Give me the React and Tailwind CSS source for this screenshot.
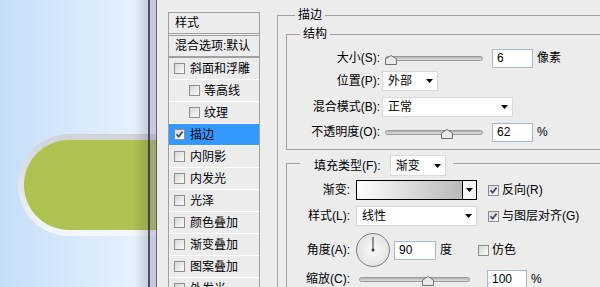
import React from "react";

const Check = ({ checked }) => (
  <span className="flex h-[11px] w-[11px] shrink-0 items-center justify-center border border-[#8e8f8f] bg-linear-to-br from-[#d6d6d6] to-[#fbfbfb]">
    {checked ? (
      <svg width="9" height="9" viewBox="0 0 9 9">
        <path d="M1.5 4.2 L3.6 6.6 L7.6 1.6" stroke="#3d4d78" strokeWidth="1.7" fill="none" />
      </svg>
    ) : null}
  </span>
);

const Arrow = () => (
  <svg width="7" height="4" viewBox="0 0 7 4" className="shrink-0">
    <path d="M0 0 H7 L3.5 4 Z" fill="#000" />
  </svg>
);

const Thumb = ({ className }) => (
  <svg width="12" height="10" viewBox="0 0 12 10" className={`absolute top-[-2px] ${className}`}>
    <path d="M6 0.5 L11.5 4 L11.5 9.5 L0.5 9.5 L0.5 4 Z" fill="#e9e9e9" stroke="#6f6f6f" />
  </svg>
);

const Input = ({ value, className }) => (
  <div className={`flex h-[19px] items-center border border-[#a7b9d1] bg-white pl-[4px] text-[12px] ${className}`}>
    {value}
  </div>
);

const Select = ({ text, className }) => (
  <div className={`flex h-[20px] items-center justify-between border border-[#d9d9d9] bg-white pl-[5px] pr-[4px] ${className}`}>
    <span>{text}</span>
    <Arrow />
  </div>
);

const items = [
  { name: "斜面和浮雕", indent: false },
  { name: "等高线", indent: true },
  { name: "纹理", indent: true },
  { name: "描边", indent: false, active: true },
  { name: "内阴影", indent: false },
  { name: "内发光", indent: false },
  { name: "光泽", indent: false },
  { name: "颜色叠加", indent: false },
  { name: "渐变叠加", indent: false },
  { name: "图案叠加", indent: false },
  { name: "外发光", indent: false },
];

export default function App() {
  return (
    <div className="flex h-[287px] w-[600px] overflow-hidden font-['Liberation_Sans','Noto_Sans_CJK_SC',sans-serif] text-[12px] text-black">
      {/* canvas behind the dialog */}
      <div className="relative h-full w-[157px] shrink-0 overflow-hidden bg-linear-to-r from-[#c6def9] to-[#eaf4fe] pl-[18px] pt-[134px]">
        <div className="h-[102px] w-[200px] rounded-l-[51px] bg-linear-to-b from-[#cfd3d8] to-[#f4f8fc] pl-[6px] pt-[6px]">
          <div className="h-[90px] w-full rounded-l-[45px] bg-[#adc251]"></div>
        </div>
        <div className="absolute right-[9px] top-0 h-full w-[14px] bg-linear-to-r from-transparent to-[rgba(40,40,60,0.18)]"></div>
        <div className="absolute right-0 top-0 flex h-full">
          <div className="w-[2px] bg-[rgba(40,40,48,0.8)]"></div>
          <div className="w-[6px] bg-[rgba(140,120,180,0.35)]"></div>
          <div className="w-[1px] bg-[rgba(50,50,50,0.7)]"></div>
        </div>
      </div>

      {/* dialog */}
      <div className="flex h-full min-w-0 flex-1 overflow-hidden bg-[#ececec] pl-[11px]">
        <div className="mt-[12px] flex w-[92px] shrink-0 flex-col self-start border border-[#a0a0a0]">
          <div className="flex h-[23px] items-center border-b-[3px] border-double border-[#a0a0a0] pl-[6px]">样式</div>
          <div className="flex h-[22px] items-center border-b-[2px] border-[#a0a0a0] pl-[6px]">混合选项:默认</div>
          {items.map((it, i) => (
            <div
              key={i}
              className={`flex h-[22px] items-center border-b border-white ${it.indent ? "pl-[20px]" : "pl-[5px]"} ${it.active ? "bg-[#3399ff]" : ""}`}
            >
              <Check checked={it.active} />
              <span className={it.indent ? "ml-[4px]" : "ml-[5px]"}>{it.name}</span>
            </div>
          ))}
        </div>

        <div className="ml-[17px] shrink-0 pt-[7px]">
          <fieldset className="w-[340px] border border-[#a0a0a0]">
            <legend className="ml-[17px] h-[16px] px-[3px] leading-[16px]">描边</legend>
            <div className="pl-[8px]">
              <fieldset className="mt-[3px] w-[330px] border border-[#a0a0a0]">
                <legend className="ml-[13px] h-[16px] px-[3px] leading-[16px]">结构</legend>
                <div className="mt-[6px] flex flex-col pb-[7px]">
                  <div className="flex h-[20px] items-center">
                    <span className="w-[93px] text-right">大小(S):</span>
                    <div className="relative ml-[5px] h-[5px] w-[98px] rounded-full border border-[#999] bg-linear-to-b from-[#b4b4b4] to-[#dedede]">
                      <Thumb className="left-[-1px]" />
                    </div>
                    <Input value="6" className="ml-[9px] w-[41px]" />
                    <span className="ml-[4px]">像素</span>
                  </div>
                  <div className="mt-[3px] flex h-[20px] items-center">
                    <span className="w-[93px] text-right">位置(P):</span>
                    <Select text="外部" className="ml-[2px] w-[56px]" />
                  </div>
                  <div className="mt-[6px] flex h-[20px] items-center">
                    <span className="w-[93px] text-right">混合模式(B):</span>
                    <Select text="正常" className="ml-[2px] w-[131px]" />
                  </div>
                  <div className="mt-[5px] flex h-[20px] items-center">
                    <span className="w-[93px] text-right">不透明度(O):</span>
                    <div className="relative ml-[5px] h-[5px] w-[98px] rounded-full border border-[#999] bg-linear-to-b from-[#b4b4b4] to-[#dedede]">
                      <Thumb className="left-[55px]" />
                    </div>
                    <Input value="62" className="ml-[9px] w-[41px]" />
                    <span className="ml-[4px]">%</span>
                  </div>
                </div>
              </fieldset>

              <fieldset className="mt-[5px] w-[330px] border border-[#a0a0a0]">
                <legend className="ml-[13px] h-[16px] pl-[14px] pr-[7px]">
                  <div className="flex h-[21px] items-center">
                    <span>填充类型(F):</span>
                    <Select text="渐变" className="ml-[9px] h-[21px] w-[56px]" />
                  </div>
                </legend>
                <div className="mt-[9px] flex flex-col">
                  <div className="flex h-[20px] items-center">
                    <span className="w-[63px] text-right">渐变:</span>
                    <div className="ml-[6px] flex h-[20px] w-[121px] border border-black">
                      <div className="flex-1 bg-linear-to-r from-white to-[#b9b9b9]"></div>
                      <div className="flex w-[14px] items-center justify-center border-l border-black bg-[#f4f4f4]">
                        <Arrow />
                      </div>
                    </div>
                    <span className="ml-[11px]"><Check checked /></span>
                    <span className="ml-[3px]">反向(R)</span>
                  </div>
                  <div className="mt-[6px] flex h-[20px] items-center">
                    <span className="w-[63px] text-right">样式(L):</span>
                    <Select text="线性" className="ml-[6px] w-[121px]" />
                    <span className="ml-[11px]"><Check checked /></span>
                    <span className="ml-[3px]">与图层对齐(G)</span>
                  </div>
                  <div className="mt-[7px] flex h-[34px] items-center">
                    <span className="w-[63px] text-right">角度(A):</span>
                    <div className="relative ml-[6px] h-[34px] w-[34px] rounded-full border border-[#7d7d7d] bg-radial from-[#fbfbfb] to-[#dadada]">
                      <svg width="34" height="34" viewBox="0 0 34 34" className="absolute left-[-1px] top-[-1px]">
                        <line x1="17" y1="4" x2="17" y2="17" stroke="#333" strokeWidth="1" />
                        <circle cx="17" cy="17" r="1.5" fill="#333" />
                      </svg>
                    </div>
                    <Input value="90" className="ml-[4px] w-[42px]" />
                    <span className="ml-[4px]">度</span>
                    <span className="ml-[26px]"><Check /></span>
                    <span className="ml-[3px]">仿色</span>
                  </div>
                  <div className="mt-[3px] flex h-[18px] items-center">
                    <span className="w-[63px] text-right">缩放(C):</span>
                    <div className="relative ml-[9px] h-[5px] w-[111px] rounded-full border border-[#999] bg-linear-to-b from-[#b4b4b4] to-[#dedede]">
                      <Thumb className="left-[62px]" />
                    </div>
                    <Input value="100" className="ml-[17px] w-[40px]" />
                    <span className="ml-[4px]">%</span>
                  </div>
                </div>
              </fieldset>
            </div>
          </fieldset>
        </div>
      </div>
    </div>
  );
}
